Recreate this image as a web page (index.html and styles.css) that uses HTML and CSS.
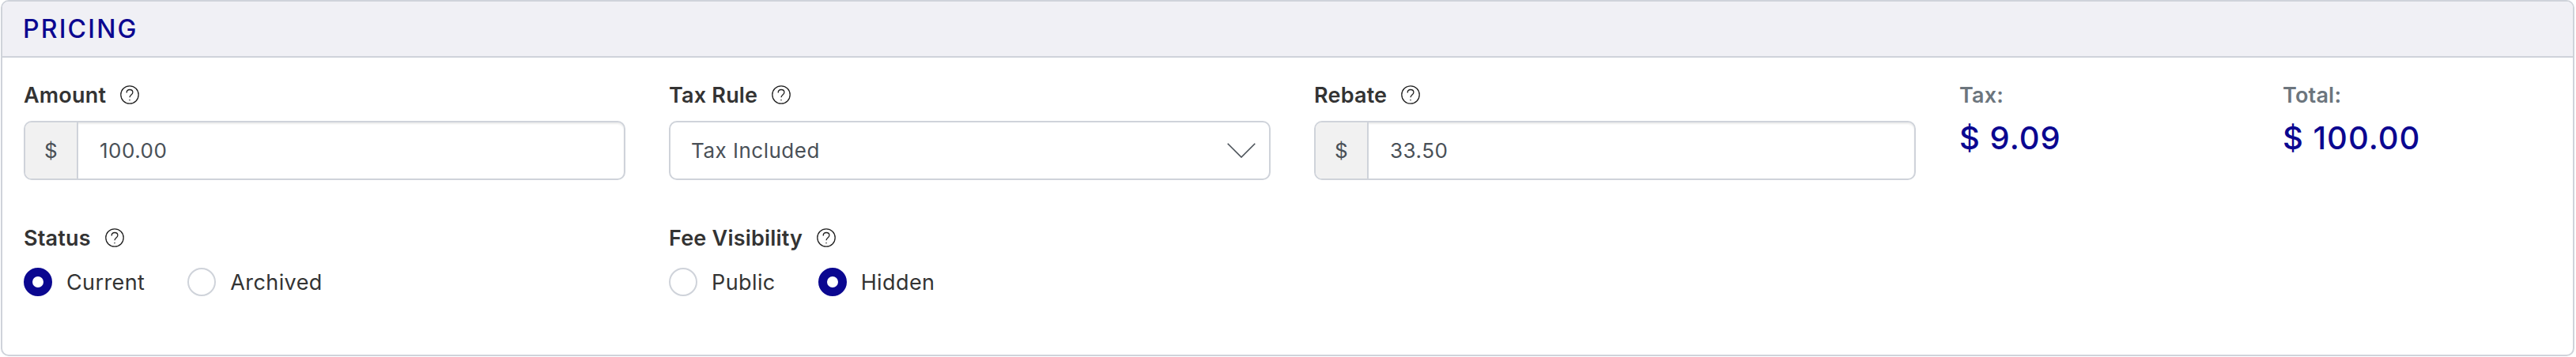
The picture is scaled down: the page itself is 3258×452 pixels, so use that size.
FILE: index.html
```html
<!DOCTYPE html>
<html lang="en">

<head>
    <meta charset="UTF-8">
    <title>Pricing</title>
    <link rel="stylesheet" href="styles.css">
</head>

<body>
    <div class="card">
        <div class="card-header">PRICING</div>
        <div class="card-body">
            <div class="form-row">
                <div class="field">
                    <div class="field-label">Amount
                        <svg class="help-icon" viewBox="0 0 24 24"><circle cx="12" cy="12" r="11.2"/><path d="M8.2 9.4c0-2.4 1.7-3.9 3.9-3.9s3.8 1.4 3.8 3.4c0 2.9-3.9 3.2-3.9 6.4"/><path d="M12 18v1.2"/></svg>
                    </div>
                    <div class="input-group">
                        <span class="input-addon">$</span>
                        <span class="input-value">100.00</span>
                    </div>
                </div>
                <div class="field">
                    <div class="field-label">Tax Rule
                        <svg class="help-icon" viewBox="0 0 24 24"><circle cx="12" cy="12" r="11.2"/><path d="M8.2 9.4c0-2.4 1.7-3.9 3.9-3.9s3.8 1.4 3.8 3.4c0 2.9-3.9 3.2-3.9 6.4"/><path d="M12 18v1.2"/></svg>
                    </div>
                    <div class="select-box">
                        <span>Tax Included</span>
                        <svg class="select-arrow" viewBox="0 0 36 19"><path d="M0.7 0.7L18 18L35.3 0.7"/></svg>
                    </div>
                </div>
                <div class="field">
                    <div class="field-label">Rebate
                        <svg class="help-icon" viewBox="0 0 24 24"><circle cx="12" cy="12" r="11.2"/><path d="M8.2 9.4c0-2.4 1.7-3.9 3.9-3.9s3.8 1.4 3.8 3.4c0 2.9-3.9 3.2-3.9 6.4"/><path d="M12 18v1.2"/></svg>
                    </div>
                    <div class="input-group">
                        <span class="input-addon">$</span>
                        <span class="input-value">33.50</span>
                    </div>
                </div>
                <div class="summary">
                    <div class="summary-label">Tax:</div>
                    <div class="summary-value">$ 9.09</div>
                </div>
                <div class="summary">
                    <div class="summary-label">Total:</div>
                    <div class="summary-value">$ 100.00</div>
                </div>
            </div>
            <div class="form-row radio-row">
                <div class="field">
                    <div class="field-label">Status
                        <svg class="help-icon" viewBox="0 0 24 24"><circle cx="12" cy="12" r="11.2"/><path d="M8.2 9.4c0-2.4 1.7-3.9 3.9-3.9s3.8 1.4 3.8 3.4c0 2.9-3.9 3.2-3.9 6.4"/><path d="M12 18v1.2"/></svg>
                    </div>
                    <div class="radio-group">
                        <span class="radio-option"><span class="radio checked"></span>Current</span>
                        <span class="radio-option"><span class="radio"></span>Archived</span>
                    </div>
                </div>
                <div class="field">
                    <div class="field-label">Fee Visibility
                        <svg class="help-icon" viewBox="0 0 24 24"><circle cx="12" cy="12" r="11.2"/><path d="M8.2 9.4c0-2.4 1.7-3.9 3.9-3.9s3.8 1.4 3.8 3.4c0 2.9-3.9 3.2-3.9 6.4"/><path d="M12 18v1.2"/></svg>
                    </div>
                    <div class="radio-group">
                        <span class="radio-option"><span class="radio"></span>Public</span>
                        <span class="radio-option"><span class="radio checked"></span>Hidden</span>
                    </div>
                </div>
            </div>
        </div>
    </div>
</body>

</html>
```

FILE: styles.css
```css
:root {
    --navy: #0b0790;
    --border: #cfd3da;
    --text: #333333;
    --muted: #495057;
}

* {
    box-sizing: border-box;
    margin: 0;
    padding: 0;
}

html,
body {
    height: 100%;
}

body {
    font-family: Inter, "Noto Sans", sans-serif;
    background: #fff;
    color: var(--text);
    padding: 0 2px 1px 1px;
}

.card {
    height: 100%;
    border: 2px solid var(--border);
    border-radius: 10px;
    overflow: hidden;
}

.card-header {
    height: 71px;
    display: flex;
    align-items: center;
    padding-left: 26px;
    background: #f0f0f5;
    border-bottom: 2px solid var(--border);
    color: var(--navy);
    font-size: 32px;
    font-weight: 500;
    letter-spacing: 2.2px;
}

.card-body {
    padding: 31px 0 0 27px;
}

.form-row {
    display: grid;
    grid-template-columns: 816px 816px 816px 409px 1fr;
}

.radio-row {
    margin-top: 57px;
}

.field {
    width: 761px;
}

.field-label,
.summary-label {
    height: 32px;
    display: flex;
    align-items: center;
    gap: 18px;
    font-size: 27px;
    font-weight: 600;
    letter-spacing: 0.2px;
}

.summary-label {
    color: #6c757d;
}

.help-icon {
    width: 24px;
    height: 24px;
    fill: none;
    stroke: #222;
    stroke-width: 1.3;
}

.input-group,
.select-box {
    height: 75px;
    margin-top: 17px;
    display: flex;
    align-items: center;
    border: 2px solid var(--border);
    border-radius: 10px;
    font-size: 26px;
    letter-spacing: 0.5px;
    color: var(--muted);
    overflow: hidden;
}

.input-group {
    box-shadow: inset 0 2px 2px rgba(0, 0, 0, 0.075);
}

.input-addon {
    width: 67px;
    height: 100%;
    flex-shrink: 0;
    display: flex;
    align-items: center;
    justify-content: center;
    background: #f1f1f1;
    border-right: 2px solid var(--border);
}

.input-value {
    padding-left: 27px;
}

.select-box {
    justify-content: space-between;
    padding: 0 17px 0 26px;
}

.select-arrow {
    width: 36px;
    height: 19px;
    fill: none;
    stroke: var(--muted);
    stroke-width: 1.6;
}

.summary-value {
    margin-top: 15px;
    line-height: 48px;
    font-size: 40px;
    font-weight: 500;
    letter-spacing: 1px;
    color: var(--navy);
}

.radio-group {
    margin-top: 22px;
    display: flex;
    gap: 54px;
}

.radio-option {
    display: flex;
    align-items: center;
    gap: 18px;
    font-size: 27px;
    letter-spacing: 0.4px;
}

.radio {
    width: 36px;
    height: 36px;
    border: 2px solid var(--border);
    border-radius: 50%;
    background: #fff;
}

.radio.checked {
    border: 11px solid var(--navy);
}
```
